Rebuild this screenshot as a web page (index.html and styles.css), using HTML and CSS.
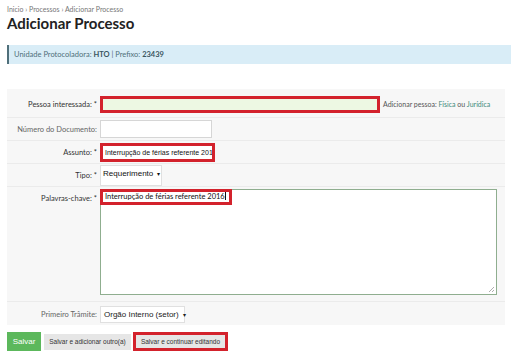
FILE: index.html
```html
<!DOCTYPE html>
<html lang="pt">
<head>
<meta charset="utf-8">
<title>Adicionar Processo</title>
<link rel="stylesheet" href="styles.css">
</head>
<body>
<div class="breadcrumb">Inicio › Processos › Adicionar Processo</div>
<h1 class="title">Adicionar Processo</h1>
<div class="info">Unidade Protocoladora: <b>HTO</b> | Prefixo: <b>23439</b></div>
<form class="form">
  <div class="row row-1">
    <label class="lbl">Pessoa interessada: *</label>
    <div class="ctrl">
      <input class="inp inp-pessoa mark" type="text">
      <span class="add">Adicionar pessoa: <a class="lnk">Física</a> ou <a class="lnk">Jurídica</a></span>
    </div>
  </div>
  <div class="row">
    <label class="lbl lbl-light">Número do Documento:</label>
    <div class="ctrl"><input class="inp inp-num" type="text"></div>
  </div>
  <div class="row">
    <label class="lbl">Assunto: *</label>
    <div class="ctrl"><div class="inp inp-assunto mark">Interrupção de férias referente 201</div></div>
  </div>
  <div class="row">
    <label class="lbl">Tipo: *</label>
    <div class="ctrl"><div class="sel sel-tipo mark">Requerimento <span class="caret">▾</span></div></div>
  </div>
  <div class="row row-area">
    <label class="lbl">Palavras-chave: *</label>
    <div class="ctrl">
      <div class="area">
        <div class="area-mark">Interrupção de férias referente 2016<span class="cursor"></span></div>
        <svg class="grip" width="7" height="7" viewBox="0 0 7 7"><path d="M6 1L1 6M6 4L4 6" stroke="#999" stroke-width="0.8"/></svg>
      </div>
    </div>
  </div>
  <div class="row row-last">
    <label class="lbl lbl-light">Primeiro Trâmite:</label>
    <div class="ctrl"><div class="sel sel-tram">Orgão Interno (setor) <span class="caret">▾</span></div></div>
  </div>
</form>
<div class="actions">
  <button class="btn btn-save" type="button">Salvar</button>
  <button class="btn btn-gray" type="button">Salvar e adicionar outro(a)</button>
  <button class="btn btn-gray btn-mark" type="button">Salvar e continuar editando</button>
</div>
</body>
</html>
```

FILE: styles.css
```css
* { box-sizing: border-box; }
html, body { margin: 0; background: #fff; }
body {
  padding: 5px 7px 0 7px;
  font-family: Lato, "Liberation Sans", sans-serif;
  color: #333;
}
.breadcrumb {
  font-size: 7px;
  line-height: 8px;
  color: #777;
}
.title {
  margin: 1px 0 0 0;
  font-size: 15px;
  line-height: 18px;
  font-weight: 700;
  color: #222;
}
.info {
  margin-top: 13px;
  height: 19px;
  background: #d9edf7;
  border-left: 2px solid #4f6f7a;
  padding-left: 5px;
  font-size: 7.5px;
  line-height: 19px;
  color: #4f6f7a;
  margin-right: -7px;
}
.info b { font-weight: 700; color: #3a5660; }
.form {
  margin: 25px 0 0 0;
  background: #f7f7f7;
  width: 498px;
}
.row {
  display: flex;
  align-items: center;
  border-bottom: 1px solid #ebebeb;
  height: 23px;
}
.row-1 { height: 29px; padding-top: 2px; }
.row-area { height: 115px; align-items: flex-start; padding-top: 2px; }
.row-last { height: 23px; border-bottom: none; padding-top: 2px; }
.lbl {
  width: 93px;
  flex: none;
  text-align: right;
  padding-right: 3px;
  font-size: 7.5px;
  color: #333;
}
.row-area .lbl { padding-top: 5px; }
.lbl-light { color: #666; }
.ctrl {
  display: flex;
  align-items: center;
  gap: 3px;
}
.inp {
  height: 18px;
  border: 1px solid #d6d6d6;
  background: #fff;
  font-family: "Liberation Sans", sans-serif;
  font-size: 7px;
  line-height: 14px;
  padding: 0 3px;
  color: #111;
  margin: 0;
}
.mark { border: 3px solid #d3222c; }
.inp-pessoa { width: 280px; height: 17px; background: #edf8e3; }
.inp-num { width: 112px; }
.inp-assunto { width: 115px; height: 19px; white-space: nowrap; overflow: hidden; padding: 0 2px; }
.add {
  font-size: 7px;
  color: #555;
}
.lnk { color: #3d8a7b; }
.sel {
  height: 19px;
  background: #fff;
  border: 1px solid #e0e0e0;
  font-family: "Liberation Sans", sans-serif;
  font-size: 8px;
  line-height: 13px;
  padding: 0 3px;
  color: #111;
  white-space: nowrap;
}
.sel-tipo { width: 62px; height: 21px; padding: 1px 2px; }
.sel-tram { width: 85px; height: 17px; line-height: 15px; color: #222; }
.caret { font-size: 6px; margin-left: 2px; }
.area {
  position: relative;
  width: 397px;
  height: 106px;
  background: #fff;
  border: 1px solid #8fae8f;
}
.area-mark {
  position: absolute;
  left: -1px;
  top: -1px;
  width: 132px;
  height: 16px;
  border: 3px solid #d3222c;
  font-family: Lato, sans-serif;
  font-size: 7.5px;
  line-height: 10px;
  padding-left: 2px;
  color: #111;
  white-space: nowrap;
}
.cursor {
  display: inline-block;
  width: 1px;
  height: 8px;
  background: #111;
  vertical-align: -1px;
}
.grip { position: absolute; right: 1px; bottom: 1px; }
.actions {
  display: flex;
  align-items: center;
  gap: 3px;
  margin-top: 7px;
}
.btn {
  font-family: "Liberation Sans", sans-serif;
  font-size: 6.5px;
  margin: 0;
  padding: 0;
  border: none;
  cursor: pointer;
  white-space: nowrap;
}
.btn-save {
  width: 34px;
  height: 19px;
  background: #5cb85c;
  color: #fff;
  font-size: 8px;
}
.btn-gray {
  width: 87px;
  height: 16px;
  background: #e6e6e6;
  color: #333;
}
.btn-mark {
  width: 95px;
  height: 19px;
  border: 3px solid #d3222c;
  margin-left: -1px;
}
```
